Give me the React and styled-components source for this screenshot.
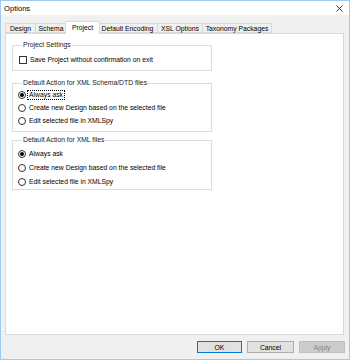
import React from "react";
import styled, { createGlobalStyle } from "styled-components";

const GlobalStyle = createGlobalStyle`
  html, body {
    margin: 0;
    padding: 0;
    background: #ffffff;
  }
  * {
    box-sizing: border-box;
  }
`;

const Window = styled.div`
  width: 350px;
  height: 360px;
  display: flex;
  flex-direction: column;
  border: 1px solid #9ccbf0;
  font-family: "Liberation Sans", Arial, sans-serif;
  font-size: 6.8px;
  color: #000;
  background: #f0f0f0;
`;

const TitleBar = styled.div`
  height: 14px;
  flex: 0 0 14px;
  background: #ffffff;
  display: flex;
  align-items: center;
  justify-content: space-between;
  padding: 0 6px 0 3px;
  font-size: 7.6px;
`;

const CloseIcon = () => (
  <svg width="7" height="7" viewBox="0 0 7 7">
    <path d="M0.5 0.5 L6.5 6.5 M6.5 0.5 L0.5 6.5" stroke="#222" strokeWidth="0.9" />
  </svg>
);

const Body = styled.div`
  flex: 1;
  display: flex;
  flex-direction: column;
  padding: 6px 5px 0 4px;
`;

const TabStrip = styled.div`
  height: 12px;
  flex: 0 0 12px;
  display: flex;
  align-items: flex-end;
  position: relative;
  z-index: 1;
  padding-left: 0;
`;

const Tab = styled.div`
  height: ${(p) => (p.active ? "13px" : "10px")};
  margin: ${(p) => (p.active ? "0 -2px -1px -2px" : "0")};
  padding: ${(p) => (p.active ? "0 7px 1px" : "0 5px")};
  width: ${(p) => p.w}px;
  display: flex;
  align-items: center;
  justify-content: center;
  white-space: nowrap;
  background: ${(p) => (p.active ? "#ffffff" : "#f0f0f0")};
  border: 1px solid #d9d9d9;
  border-bottom: ${(p) => (p.active ? "none" : "1px solid #d9d9d9")};
  border-left-width: ${(p) => (p.first || p.active ? "1px" : "0")};
  position: relative;
  z-index: ${(p) => (p.active ? 2 : 1)};
`;

const Panel = styled.div`
  flex: 1;
  background: #ffffff;
  border: 1px solid #d9d9d9;
  padding: 7px 6px 0 6px;
  display: flex;
  flex-direction: column;
  align-items: flex-start;
`;

const Group = styled.fieldset`
  width: 200px;
  margin: ${(p) => p.mt || 0}px 0 0 0;
  padding: ${(p) => p.pt}px 0 ${(p) => p.pb}px 5px;
  border: 1px solid #dcdcdc;
  min-width: 0;
`;

const Legend = styled.legend`
  padding: 0 1px;
  margin-left: 4px;
  line-height: 8px;
  height: 8px;
  color: #1a1a1a;
`;

const Row = styled.label`
  height: ${(p) => p.h}px;
  display: flex;
  align-items: center;
  gap: 2px;
  white-space: nowrap;
`;

const CheckBox = styled.span`
  width: 8px;
  height: 8px;
  flex: 0 0 8px;
  margin-left: 1px;
  border: 1px solid #333;
  background: #fff;
`;

const Radio = styled.span`
  width: 8px;
  height: 8px;
  flex: 0 0 8px;
  border-radius: 50%;
  border: 1px solid #333;
  background: #fff;
  display: flex;
  align-items: center;
  justify-content: center;
  &::after {
    content: "";
    width: 4px;
    height: 4px;
    border-radius: 50%;
    background: ${(p) => (p.checked ? "#000" : "transparent")};
  }
`;

const RowText = styled.span`
  padding: 0 1px;
  line-height: 8px;
  outline: ${(p) => (p.focused ? "1px dotted #000" : "none")};
  outline-offset: 0;
`;

const Footer = styled.div`
  height: 24px;
  flex: 0 0 24px;
  display: flex;
  justify-content: flex-end;
  align-items: center;
  gap: 5px;
  margin-right: -1px;
`;

const Button = styled.div`
  width: ${(p) => p.w}px;
  height: 12px;
  display: flex;
  align-items: center;
  justify-content: center;
  background: ${(p) => (p.disabled ? "#cccccc" : "#e1e1e1")};
  border: 1px solid
    ${(p) => (p.primary ? "#0078d7" : p.disabled ? "#bfbfbf" : "#adadad")};
  color: ${(p) => (p.disabled ? "#838383" : "#000")};
`;

const tabs = [
  { label: "Design", w: 31 },
  { label: "Schema", w: 31 },
  { label: "Project", w: 35, active: true },
  { label: "Default Encoding", w: 60 },
  { label: "XSL Options", w: 45 },
  { label: "Taxonomy Packages", w: 69 },
];

const options = [
  "Always ask",
  "Create new Design based on the selected file",
  "Edit selected file in XMLSpy",
];

export default function App() {
  return (
    <>
      <GlobalStyle />
      <Window>
        <TitleBar>
          <span>Options</span>
          <CloseIcon />
        </TitleBar>
        <Body>
          <TabStrip>
            {tabs.map((t, i) => (
              <Tab key={t.label} w={t.w} active={t.active} first={i === 0}>
                {t.label}
              </Tab>
            ))}
          </TabStrip>
          <Panel>
            <Group pt={6} pb={5}>
              <Legend>Project Settings</Legend>
              <Row h={10}>
                <CheckBox />
                <RowText>Save Project without confirmation on exit</RowText>
              </Row>
            </Group>
            <Group mt={8} pt={1} pb={4}>
              <Legend>Default Action for XML Schema/DTD files</Legend>
              {options.map((o, i) => (
                <Row h={13} key={o}>
                  <Radio checked={i === 0} />
                  <RowText focused={i === 0}>{o}</RowText>
                </Row>
              ))}
            </Group>
            <Group mt={4} pt={3} pb={0}>
              <Legend>Default Action for XML files</Legend>
              {options.map((o, i) => (
                <Row h={14} key={o}>
                  <Radio checked={i === 0} />
                  <RowText>{o}</RowText>
                </Row>
              ))}
            </Group>
          </Panel>
          <Footer>
            <Button primary w={45}>OK</Button>
            <Button w={47}>Cancel</Button>
            <Button disabled w={46}>Apply</Button>
          </Footer>
        </Body>
      </Window>
    </>
  );
}
